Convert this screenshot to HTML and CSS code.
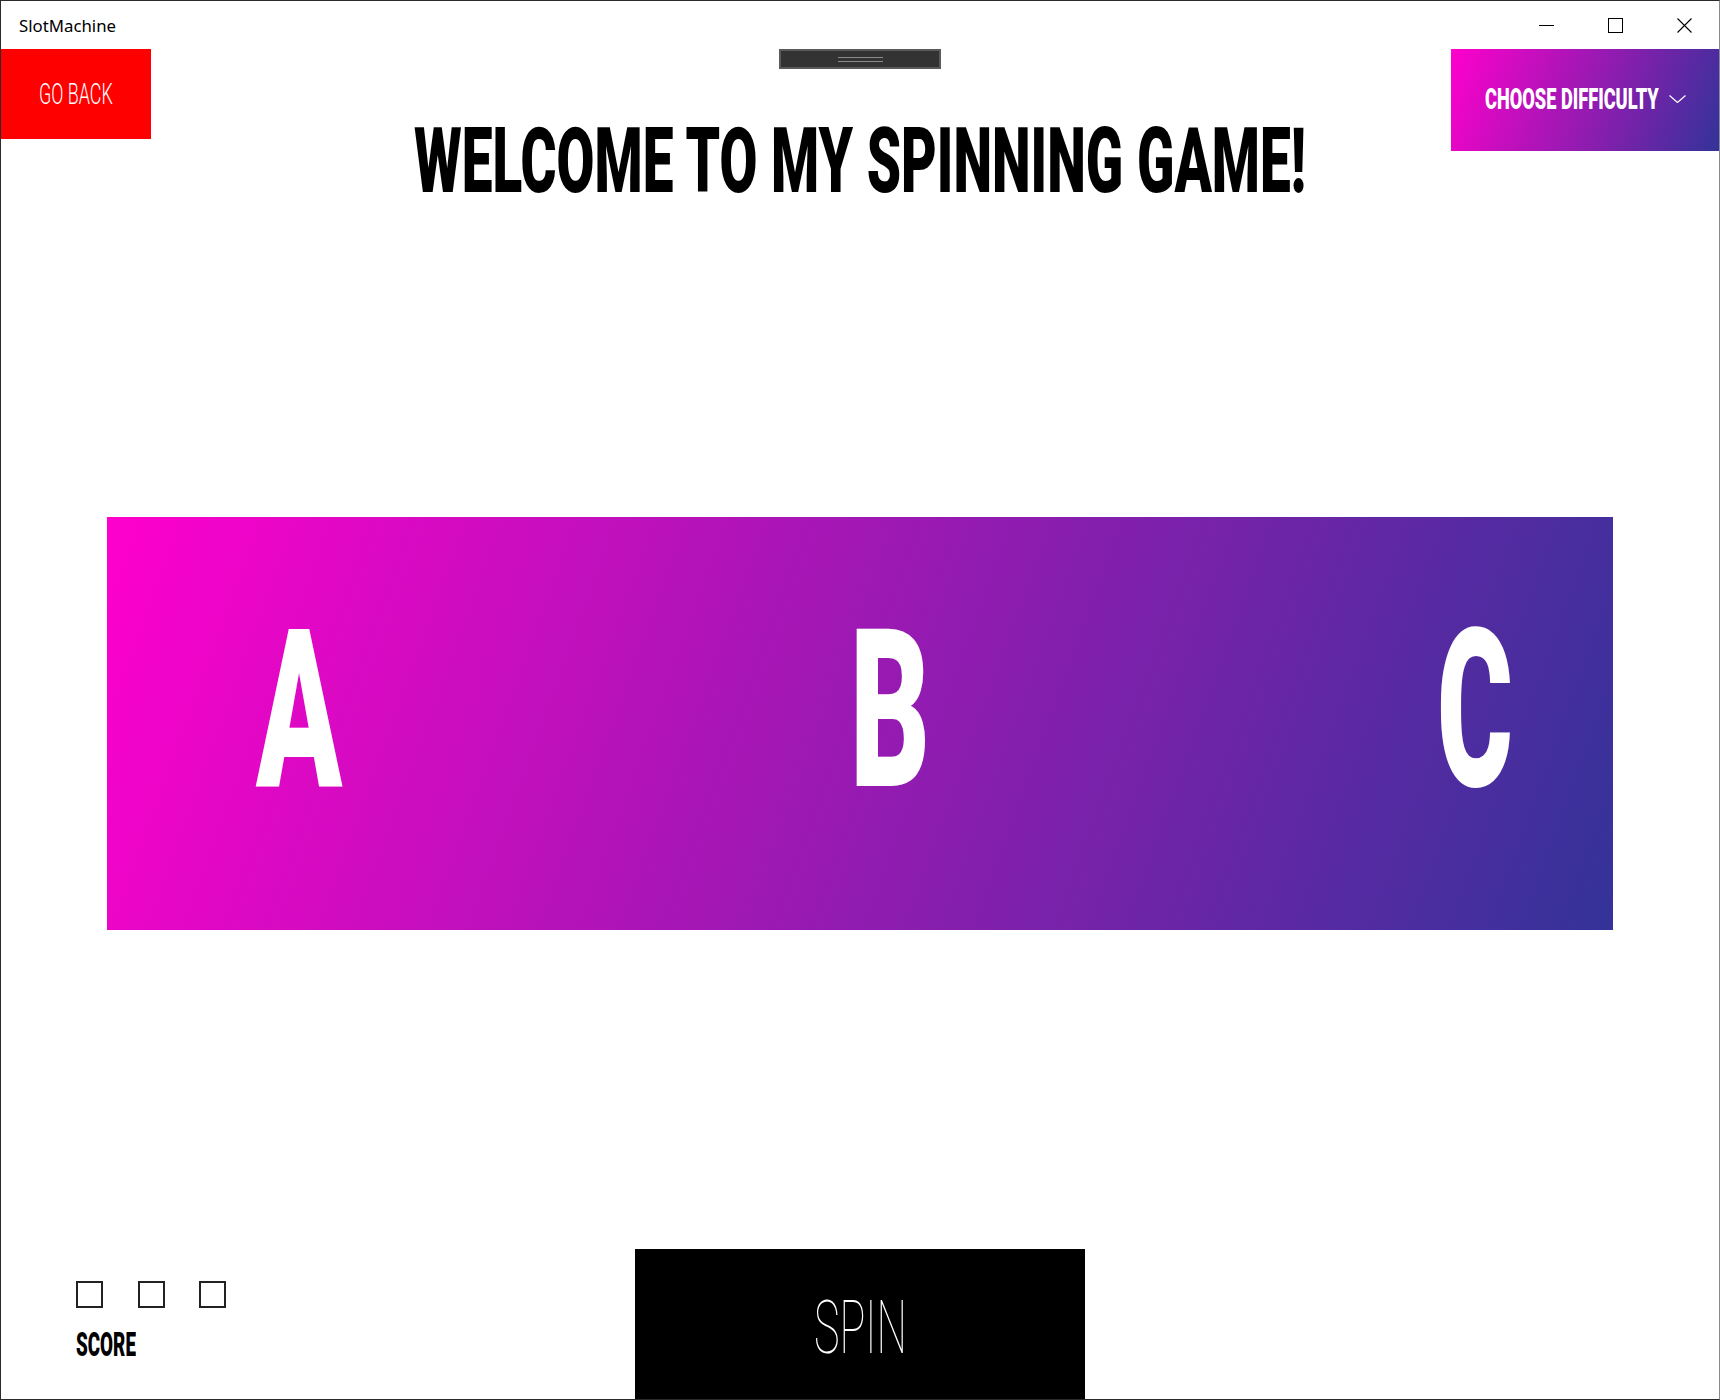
FILE: index.html
```html
<!DOCTYPE html>
<html lang="en">
<head>
<meta charset="utf-8">
<title>SlotMachine</title>
<link rel="stylesheet" href="styles.css">
</head>
<body>
<div class="window">
  <div class="titlebar">
    <span class="app-title">SlotMachine</span>
    <div class="controls">
      <span class="ctl"><svg width="15" height="15" viewBox="0 0 15 15"><path d="M0 7.5H15" stroke="#000" stroke-width="1" fill="none"/></svg></span>
      <span class="ctl"><svg width="15" height="15" viewBox="0 0 15 15"><rect x="0.5" y="0.5" width="14" height="14" stroke="#000" stroke-width="1" fill="none"/></svg></span>
      <span class="ctl"><svg width="15" height="15" viewBox="0 0 15 15"><path d="M0.5 0.5L14.5 14.5M14.5 0.5L0.5 14.5" stroke="#000" stroke-width="1.1" fill="none"/></svg></span>
    </div>
  </div>
  <div class="content">
    <header class="top">
      <div class="go-back"><span class="fit fit-goback"><span class="in">GO BACK</span></span></div>
      <div class="center">
        <div class="handle"><span class="grip"></span></div>
        <h1 class="heading"><span class="fit fit-heading"><span class="in">WELCOME TO MY SPINNING GAME!</span></span></h1>
      </div>
      <div class="right">
        <div class="difficulty">
          <span class="fit fit-diff"><span class="in">CHOOSE DIFFICULTY</span></span>
          <svg class="chev" width="17" height="8" viewBox="0 0 17 8"><polyline points="0.5,0.5 8.5,7.5 16.5,0.5" stroke="#fff" stroke-width="1.2" fill="none"/></svg>
        </div>
      </div>
    </header>
    <section class="reels">
      <span class="fit reel reel-a"><span class="in">A</span></span>
      <span class="fit reel reel-b"><span class="in">B</span></span>
      <span class="fit reel reel-c"><span class="in">C</span></span>
    </section>
    <footer class="bottom">
      <div class="score">
        <div class="boxes"><span class="box"></span><span class="box"></span><span class="box"></span></div>
        <div class="score-label"><span class="fit fit-score"><span class="in">SCORE</span></span></div>
      </div>
      <div class="spin"><span class="fit fit-spin"><span class="in">SPIN</span></span></div>
      <div></div>
    </footer>
  </div>
</div>
</body>
</html>
```

FILE: styles.css
```css
* { box-sizing: border-box; }
html, body { margin: 0; padding: 0; background: #fff; }
body { width: 1720px; height: 1400px; overflow: hidden; }

.window {
  width: 1720px; height: 1400px;
  border: 1px solid #2b2b2b; border-right-color: #8a8a8a;
  display: flex; flex-direction: column; overflow: hidden; background: #fff;
}
.titlebar { height: 48px; flex: none; display: flex; align-items: center; justify-content: space-between; }
.app-title { font-family: "Noto Sans", "Open Sans", sans-serif; font-size: 16.8px; padding-left: 18px; color: #000; }
.controls { display: flex; height: 48px; }
.ctl { width: 69px; height: 48px; display: flex; align-items: center; justify-content: center; }
.ctl svg { display: block; }

.content { flex: 1; display: flex; flex-direction: column; min-height: 0; }

.fit { display: inline-block; white-space: nowrap; }
.fit .in { display: inline-block; transform-origin: 0 0; white-space: nowrap; }

.heading, .difficulty, .reel, .score-label {
  font-family: Roboto, "Liberation Sans", Arial, sans-serif; font-weight: 900;
}

.top { display: grid; grid-template-columns: 268px 1fr 268px; align-items: start; }
.go-back {
  width: 150px; height: 90px; background: #ff0000; color: #fff;
  display: flex; align-items: center; justify-content: center;
  font-family: Roboto, "Liberation Sans", sans-serif; font-weight: 300; font-size: 29.5px; line-height: 30px;
}
.fit-goback { width: 74px; }
.fit-goback .in { transform: scaleX(0.607); }

.center { display: flex; flex-direction: column; align-items: center; }
.handle {
  width: 162px; height: 20px; background: #333; border: 2px solid #5a5a5a;
  display: flex; align-items: center; justify-content: center;
}
.grip { width: 45px; height: 5px; border-top: 1px solid #8c8c8c; border-bottom: 1px solid #8c8c8c; }
.heading { margin: 48px 0 0; font-size: 90px; line-height: 90px; color: #000; text-align: center; }
.fit-heading { width: 892px; }
.fit-heading .in { transform: scaleX(0.6105); }

.right { display: flex; justify-content: flex-end; }
.difficulty {
  width: 268px; height: 102px; padding-bottom: 2px;
  background: linear-gradient(110deg, #ff00cc, #333399);
  color: #fff; display: flex; align-items: center; justify-content: center; gap: 10px;
  font-size: 29.5px; line-height: 30px;
}
.fit-diff { width: 174px; }
.fit-diff .in { transform: scaleX(0.617); }

.reels {
  margin: 310px 0 0 106px; width: 1506px; height: 413px;
  background: linear-gradient(110deg, #ff00cc, #333399);
  display: flex; justify-content: space-between; align-items: flex-start;
  padding: 83px 100px 0 149px;
  color: #fff; font-size: 221px; line-height: 222px;
}
.reel-a { width: 86px; }
.reel-b { width: 80px; }
.reel-c { width: 76px; }
.reel-a .in { transform: scaleX(0.572); }
.reel-b .in { transform: scaleX(0.562); }
.reel-c .in { transform: scaleX(0.523); }

.bottom { margin-top: auto; height: 150px; flex: none; display: grid; grid-template-columns: 1fr 450px 1fr; }
.score { padding: 32px 0 0 75px; }
.boxes { display: flex; gap: 34.5px; }
.box { width: 27px; height: 27px; border: 2px solid #222; }
.score-label { margin-top: 21px; font-size: 32.3px; line-height: 32px; color: #000; }
.fit-score { width: 60px; }
.fit-score .in { transform: scaleX(0.5825); }

.spin {
  background: #000; color: #fff; height: 150px;
  display: flex; justify-content: center; align-items: flex-start; padding-top: 42px;
  font-family: Roboto, "Liberation Sans", sans-serif; font-weight: 100; font-size: 74.5px; line-height: 74.5px;
}
.fit-spin { width: 93px; }
.fit-spin .in { transform: scaleX(0.578); }
```
